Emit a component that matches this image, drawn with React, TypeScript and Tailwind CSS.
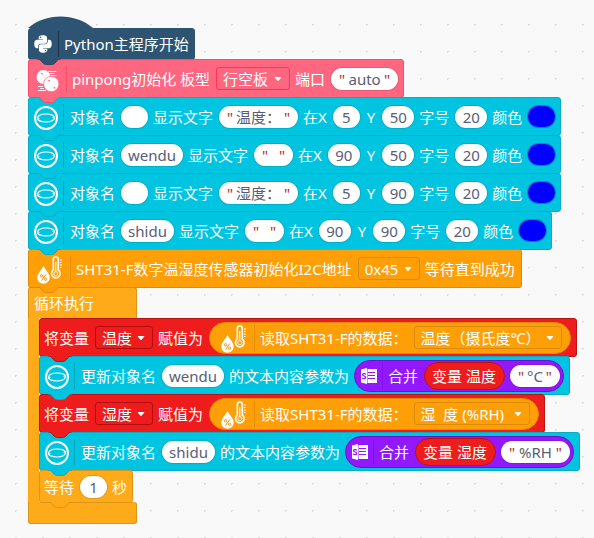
import type { ReactNode } from "react";
import { FaPython } from "react-icons/fa";

const themes = {
  navy: { box: "bg-[#2d5472] border-[#2d5472]", line: "bg-[#17334d]", fill: "#2d5472", stroke: "#26475f" },
  pink: { box: "bg-[#ff6680] border-[#f2506c]", line: "bg-[#ff4d6a]", fill: "#ff6680", stroke: "#f2506c" },
  cyan: { box: "bg-[#00c4e0] border-[#0aabc4]", line: "bg-[#0aa5bd]", fill: "#00c4e0", stroke: "#0aabc4" },
  orange: { box: "bg-[#ff9f08] border-[#dd8a08]", line: "bg-[#e88c00]", fill: "#ff9f08", stroke: "#dd8a08" },
  amber: { box: "bg-[#ffab19] border-[#dc9518]", line: "bg-[#dc9518]", fill: "#ffab19", stroke: "#dc9518" },
  red: { box: "bg-[#ee1c1c] border-[#b81414]", line: "bg-[#b81414]", fill: "#ee1c1c", stroke: "#b81414" },
  purple: { box: "bg-[#9218ff] border-[#6d12c4]", line: "bg-[#8512e6]", fill: "#9218ff", stroke: "#6d12c4" },
};
type Theme = keyof typeof themes;

function Notch({ theme }: { theme: Theme }) {
  const t = themes[theme];
  return (
    <svg className="pointer-events-none absolute top-full left-2 z-10" width="24" height="7" viewBox="0 0 24 7" aria-hidden="true">
      <path d="M0 0C2 0 3 .7 4 1.7L6 4C7 5 8 5.5 9.500 5.500H14.500C16 5.500 17 5 18 4L20 1.700C21 .7 22 0 24 0Z" fill={t.fill} />
      <path d="M0 0C2 0 3 .7 4 1.700L6 4C7 5 8 5.500 9.500 5.500H14.500C16 5.500 17 5 18 4L20 1.700C21 .7 22 0 24 0" fill="none" stroke={t.stroke} strokeWidth="1" />
    </svg>
  );
}

function Block({ theme, className = "h-[39px] px-[5px]", children }: { theme: Theme; className?: string; children?: ReactNode }) {
  return (
    <div className={`relative -mb-px flex w-max items-center gap-[5px] rounded-[3px] border ${themes[theme].box} ${className}`}>
      {children}
      <Notch theme={theme} />
    </div>
  );
}

function Divider({ theme }: { theme: Theme }) {
  return <span className={`h-[26px] w-px ${themes[theme].line}`} />;
}

function Text({ children, className = "pr-px" }: { children: ReactNode; className?: string }) {
  return <span className={`whitespace-nowrap ${className}`}>{children}</span>;
}

function Field({ value, label, width, quoted = false }: { value: string; label: string; width: string; quoted?: boolean }) {
  return (
    <label className={`flex h-[22px] items-center rounded-full bg-white text-[#575e75] shadow-[0_0_0_1px_rgba(0,0,0,0.1)] ${quoted ? "px-2" : "px-1"} ${width}`}>
      {quoted && <span className="text-[#b22a2a]">"</span>}
      <input aria-label={label} defaultValue={value} className="w-full min-w-0 flex-1 bg-transparent text-center outline-none" />
      {quoted && <span className="text-[#b22a2a]">"</span>}
    </label>
  );
}

function Dropdown({ options, label, width, line }: { options: string[]; label: string; width: string; line: string }) {
  return (
    <span className={`relative h-[23px] ${width}`}>
      <select aria-label={label} className={`h-full w-full appearance-none rounded-[3px] border bg-transparent pl-1.5 text-white outline-none ${line}`}>
        {options.map((o) => (
          <option key={o} className="text-black">{o}</option>
        ))}
      </select>
      <svg className="pointer-events-none absolute top-2.5 right-2" width="8" height="5" viewBox="0 0 8 5" aria-hidden="true">
        <path d="M1.200 .5H6.800L4 3.800Z" fill="#fff" stroke="#fff" strokeLinejoin="round" />
      </svg>
    </span>
  );
}

function Swatch() {
  return <button aria-label="颜色" className="h-[21px] w-[27px] rounded-full bg-[#0000ff] shadow-[0_0_0_1px_rgba(0,80,180,0.5)]" />;
}

function RingIcon() {
  return (
    <svg className="mt-[3px]" width="24" height="24" viewBox="0 0 24 24" fill="none" stroke="#fff" aria-hidden="true">
      <circle cx="12" cy="12" r="11" strokeWidth="2" />
      <path d="M3.800 13C3 9.500 7 8 12 8C17 8 21 9.500 20.300 12.200M20.200 11C21 14.500 17 16 12 16C7 16 3 14.500 3.700 11.800" strokeWidth="1.200" />
      <path d="M3 11.500L4 13.500L5.500 12M18.500 12L20 10.500L21 12.500" strokeWidth=".8" />
    </svg>
  );
}

function PingPongIcon() {
  return (
    <svg className="mt-1" width="23" height="22" viewBox="0 0 23 22" aria-hidden="true">
      <circle cx="7.500" cy="7" r="7" fill="#fff" />
      <path d="M12 1.500H20.500M14 3.500H18.500M15 5.500H20.500M2 16.500H7M4 18.500H8M2 20.500H10" stroke="#fff" strokeWidth=".9" />
      <circle cx="15.200" cy="14" r="7.700" fill="#fff" stroke="#ff6680" strokeWidth=".7" />
      <path d="M5.500 3.500L6.300 4M12.800 10.500L13.600 11M18.200 17.500L18.800 18" stroke="#ff6680" strokeWidth="1.300" strokeLinecap="round" />
    </svg>
  );
}

function ThermoIcon() {
  return (
    <svg className="mx-[3px] mt-[3px]" width="25" height="28" viewBox="0 0 25 28" fill="none" stroke="#fff" aria-hidden="true">
      <path d="M6.500 10C5 13.500 .3 17.500 .3 21.500A6.200 6.200 0 0 0 12.700 21.500C12.700 17.500 8 13.500 6.500 10Z" fill="#fff" stroke="none" />
      <path d="M8.800 18.500L4.500 24.500" stroke="#f09000" strokeWidth="1" />
      <circle cx="4.600" cy="19.800" r="1.200" stroke="#f09000" strokeWidth=".9" />
      <circle cx="8.600" cy="23.200" r="1.200" stroke="#f09000" strokeWidth=".9" />
      <path d="M16.300 14.100V3.500A2.500 2.500 0 0 1 21.300 3.500V14.100A4.300 4.300 0 1 1 16.300 14.100Z" strokeWidth="1.600" />
      <path d="M18.800 6V16" strokeWidth="1.100" />
      <circle cx="18.800" cy="17.700" r="2" strokeWidth="1" />
      <path d="M23 4H25M23 6.500H24.500M23 9H25M23 11.500H24.500" strokeWidth="1" />
    </svg>
  );
}

function StringIcon() {
  return (
    <svg width="16" height="16" viewBox="0 0 16 16" aria-hidden="true">
      <path d="M0 1.500L6 0V16L0 14.500Z" fill="#fff" />
      <path d="M6.500 1H16V15H6.500Z" fill="#fff" />
      <path d="M7 4.500H14M7 7.500H14M7 10.500H14" stroke="#9218ff" strokeWidth="1" />
      <path d="M4.800 6.300C4 5.300 1.500 5.300 1.500 6.800C1.500 8.300 4.800 7.700 4.800 9.400C4.800 10.900 2 10.900 1.200 9.800" fill="none" stroke="#9218ff" strokeWidth="1.200" />
    </svg>
  );
}

function ShowText({ name, nameWidth, text, textWidth, x, xWidth, y }: { name: string; nameWidth: string; text: string; textWidth: string; x: string; xWidth: string; y: string }) {
  return (
    <Block theme="cyan">
      <RingIcon />
      <Divider theme="cyan" />
      <Text className="px-px">对象名</Text>
      <Field label="对象名" value={name} width={nameWidth} />
      <Text>显示文字</Text>
      <Field label="显示文字" value={text} width={textWidth} quoted />
      <Text>在X</Text>
      <Field label="X" value={x} width={xWidth} />
      <Text className="px-0.5">Y</Text>
      <Field label="Y" value={y} width="w-8" />
      <Text>字号</Text>
      <Field label="字号" value="20" width="w-8" />
      <Text>颜色</Text>
      <Swatch />
    </Block>
  );
}

function SetVariable({ name, reading, readingWidth }: { name: string; reading: string; readingWidth: string }) {
  return (
    <Block theme="red" className="h-[39px] pr-[5px] pl-1">
      <Text>将变量</Text>
      <Dropdown label="变量" options={[name]} width="w-[58px]" line="border-[#b01010]" />
      <Text>赋值为</Text>
      <div className={`flex h-8 items-center gap-[5px] rounded-full border px-2 ${themes.orange.box}`}>
        <ThermoIcon />
        <Divider theme="orange" />
        <Text>读取SHT31-F的数据：</Text>
        <Dropdown label="数据" options={[reading]} width={readingWidth} line="border-[#dd8a08]" />
      </div>
    </Block>
  );
}

function UpdateText({ object, objectWidth, variable, unit, unitWidth }: { object: string; objectWidth: string; variable: string; unit: string; unitWidth: string }) {
  return (
    <Block theme="cyan">
      <RingIcon />
      <Divider theme="cyan" />
      <Text className="px-px">更新对象名</Text>
      <Field label="更新对象名" value={object} width={objectWidth} />
      <Text className="">的文本内容参数为</Text>
      <div className={`flex h-8 items-center gap-[5px] rounded-full border pr-[3px] pl-1.5 ${themes.purple.box}`}>
        <StringIcon />
        <Divider theme="purple" />
        <Text>合并</Text>
        <div className={`flex h-7 items-center rounded-full border px-[7px] ${themes.red.box}`}>
          <Text>变量 {variable}</Text>
        </div>
        <Field label="单位" value={unit} width={unitWidth} quoted />
      </div>
    </Block>
  );
}

export default function App() {
  return (
    <main className="min-h-screen w-full overflow-hidden bg-[#f9f9f9] bg-[radial-gradient(circle,#dddddd_1px,transparent_1px)] bg-[length:27px_27px] bg-[position:2px_11px] pt-4 pl-7 font-['Noto_Sans','Noto_Sans_CJK_SC',sans-serif] text-[15px] leading-5 text-white">
      <svg className="block" width="66" height="12" viewBox="0 0 66 12" aria-hidden="true">
        <path d="M0 12C17 -3.500 48 -3.500 65 12Z" fill="#2d5472" />
      </svg>
      <Block theme="navy" className="h-8 px-1">
        <FaPython size={20} />
        <Divider theme="navy" />
        <Text>Python主程序开始</Text>
      </Block>
      <Block theme="pink">
        <span className="px-0.5"><PingPongIcon /></span>
        <Divider theme="pink" />
        <Text>pinpong初始化 板型</Text>
        <Dropdown label="板型" options={["行空板"]} width="w-[74px]" line="border-[#ff3355]" />
        <Text>端口</Text>
        <Field label="端口" value="auto" width="w-[67px]" quoted />
      </Block>
      <ShowText name="" nameWidth="w-[27px]" text="温度：" textWidth="w-[79px]" x="5" xWidth="w-[27px]" y="50" />
      <ShowText name="wendu" nameWidth="w-[62px]" text=" " textWidth="w-[39px]" x="90" xWidth="w-8" y="50" />
      <ShowText name="" nameWidth="w-[27px]" text="湿度：" textWidth="w-[79px]" x="5" xWidth="w-[27px]" y="90" />
      <ShowText name="shidu" nameWidth="w-[53px]" text=" " textWidth="w-[39px]" x="90" xWidth="w-8" y="90" />
      <Block theme="orange">
        <ThermoIcon />
        <Divider theme="orange" />
        <Text>SHT31-F数字温湿度传感器初始化I2C地址</Text>
        <Dropdown label="I2C地址" options={["0x45", "0x44"]} width="w-[62px]" line="border-[#dd8a08]" />
        <Text>等待直到成功</Text>
      </Block>
      <section className="w-max">
        <header className="flex h-[31px] w-[109px] items-center rounded-t-[3px] border border-b-0 border-[#dc9518] bg-[#ffab19] px-[5px]">
          循环执行
        </header>
        <div className="border-l-[11px] border-[#ffab19]">
          <SetVariable name="温度" reading="温度（摄氏度℃）" readingWidth="w-[148px]" />
          <UpdateText object="wendu" objectWidth="w-[62px]" variable="温度" unit="°C" unitWidth="w-[50px]" />
          <SetVariable name="湿度" reading={"湿\u00a0\u00a0度 (%RH)"} readingWidth="w-[116px]" />
          <UpdateText object="shidu" objectWidth="w-[53px]" variable="湿度" unit="%RH" unitWidth="w-[69px]" />
          <Block theme="amber" className="h-[33px] px-1">
            <Text>等待</Text>
            <Field label="秒数" value="1" width="w-[27px]" />
            <Text>秒</Text>
          </Block>
        </div>
        <footer className="h-[22px] w-[109px] rounded-b-[3px] rounded-tr-[3px] border border-t-0 border-[#dc9518] bg-[#ffab19]" />
      </section>
    </main>
  );
}
